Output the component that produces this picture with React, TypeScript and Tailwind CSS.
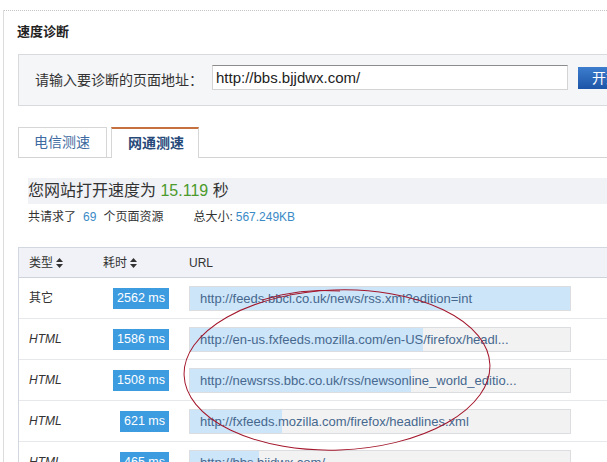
import React from "react";

const SortIcon = () => (
  <svg width="7" height="10" viewBox="0 0 7 10" className="ml-[3px] shrink-0">
    <polygon points="0,4 3.5,0 7,4" fill="#333" />
    <polygon points="0,6 3.5,10 7,6" fill="#333" />
  </svg>
);

const rows = [
  { type: "其它", italic: false, ms: "2562 ms", url: "http://feeds.bbci.co.uk/news/rss.xml?edition=int", fill: 380 },
  { type: "HTML", italic: true, ms: "1586 ms", url: "http://en-us.fxfeeds.mozilla.com/en-US/firefox/headl...", fill: 233 },
  { type: "HTML", italic: true, ms: "1508 ms", url: "http://newsrss.bbc.co.uk/rss/newsonline_world_editio...", fill: 221 },
  { type: "HTML", italic: true, ms: "621 ms", url: "http://fxfeeds.mozilla.com/firefox/headlines.xml", fill: 92 },
  { type: "HTML", italic: true, ms: "465 ms", url: "http://bbs.bjjdwx.com/", fill: 69 },
];

export default function App() {
  return (
    <div className="relative w-[607px] h-[462px] overflow-hidden bg-white text-[#333] font-['Liberation_Sans','Noto_Sans_CJK_SC',sans-serif]">
      <div className="ml-[3px] h-full border-l border-[#dcdcdc]">
        <div className="mt-[10px] border-t border-dotted border-[#c4c4c4] pl-[14px]">
          <div className="pt-[11px] leading-[20px] text-[13px] font-bold text-[#222] -ml-[1px]">速度诊断</div>

          <div className="mt-[12px] w-[640px] h-[52px] border border-[#d9dadd] bg-[#f5f6f8] flex items-start pt-[10px] pl-[16px]">
            <div className="w-[177px] shrink-0 mt-[3px] leading-[25px] text-[14px] text-[#333] whitespace-nowrap">请输入要诊断的页面地址：</div>
            <div className="w-[356px] shrink-0 h-[25px] bg-white border border-[#d4d4d4] border-t-[#8c8c8c] pl-[3px] text-[15px] leading-[23px] text-[#222] whitespace-nowrap">
              http://bbs.bjjdwx.com/
            </div>
            <div className="ml-[10px] shrink-0 mt-[2px] h-[22px] px-[14px] bg-gradient-to-b from-[#3d7dce] to-[#1d55a8] text-white text-[14px] leading-[22px] whitespace-nowrap">
              开始诊断
            </div>
          </div>

          <div className="mt-[21px] w-[620px] flex items-start gap-[4px] border-b border-[#d3d3d3]">
            <div className="w-[89px] shrink-0 h-[30px] border-t border-x border-[#d6d6d6] bg-white pl-[15px] text-[14px] leading-[29px] text-[#3d6aa0]">
              电信测速
            </div>
            <div className="w-[88px] shrink-0 h-[31px] -mb-px border-x border-[#d6d6d6] border-t-2 border-t-[#c5713f] bg-white pl-[16px] text-[14px] leading-[28px] font-bold text-[#27497a]">
              网通测速
            </div>
          </div>

          <div className="mt-[20px] ml-[10px] w-[620px] h-[26px] bg-[#f1f2f6] text-[16px] leading-[26px] text-[#333] whitespace-nowrap">
            您网站打开速度为 <span className="text-[#4b9a2b]">15.119</span> 秒
          </div>
          <div className="mt-[3px] ml-[10px] leading-[20px] text-[12px] text-[#333] flex whitespace-nowrap">
            <span>共请求了</span>
            <span className="ml-[7px] text-[#3a8ac6]">69</span>
            <span className="ml-[7px]">个页面资源</span>
            <span className="ml-[30px]">总大小:</span>
            <span className="ml-[3px] text-[#3a8ac6]">567.249KB</span>
          </div>

          <div className="mt-[20px] w-[620px] border-t border-l border-[#d3d7df]">
            <div className="h-[30px] bg-[#f0f2f7] border-b border-[#cdd2db] flex items-center text-[12px] text-[#333]">
              <div className="w-[84px] shrink-0 pl-[10px] flex items-center">类型<SortIcon /></div>
              <div className="w-[66px] shrink-0 flex items-center">耗时<SortIcon /></div>
              <div className="ml-[20px]">URL</div>
            </div>
            {rows.map((r, i) => (
              <div key={i} className="h-[41px] border-b border-[#e6e8ec] flex items-center text-[12px]">
                <div className={`w-[84px] shrink-0 pl-[10px] ${r.italic ? "italic" : ""}`}>{r.type}</div>
                <div className="w-[66px] shrink-0 flex justify-end">
                  <span className="h-[21px] px-[4px] bg-[#3d9be0] text-white text-[12.5px] leading-[21px] whitespace-nowrap">{r.ms}</span>
                </div>
                <div className="ml-[20px] shrink-0 relative w-[382px] h-[25px] border border-[#dcdde0] bg-[#f2f2f2]">
                  <div className="absolute left-0 top-0 bottom-0 bg-[#cde5f8]" style={{ width: `${r.fill}px` }} />
                  <div className="relative pl-[10px] text-[13px] leading-[23px] text-[#46688f] whitespace-nowrap">{r.url}</div>
                </div>
              </div>
            ))}
          </div>
        </div>
      </div>

      <svg className="absolute inset-0 pointer-events-none" width="607" height="462" viewBox="0 0 607 462">
        <ellipse cx="337" cy="370" rx="153" ry="80" fill="none" stroke="#a3162b" strokeWidth="1" transform="rotate(-2 337 370)" />
        <path d="M 262 300 Q 300 288 340 291" fill="none" stroke="#a3162b" strokeWidth="1" />
      </svg>
    </div>
  );
}
